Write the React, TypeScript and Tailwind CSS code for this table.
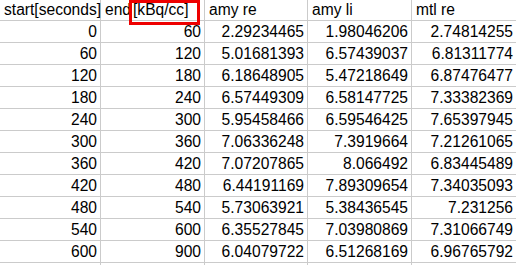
const rows: [string, string, string, string, string][] = [
  ['0', '60', '2.29234465', '1.98046206', '2.74814255'],
  ['60', '120', '5.01681393', '6.57439037', '6.81311774'],
  ['120', '180', '6.18648905', '5.47218649', '6.87476477'],
  ['180', '240', '6.57449309', '6.58147725', '7.33382369'],
  ['240', '300', '5.95458466', '6.59546425', '7.65397945'],
  ['300', '360', '7.06336248', '7.3919664', '7.21261065'],
  ['360', '420', '7.07207865', '8.066492', '6.83445489'],
  ['420', '480', '6.44191169', '7.89309654', '7.34035093'],
  ['480', '540', '5.73063921', '5.38436545', '7.231256'],
  ['540', '600', '6.35527845', '7.03980869', '7.31066749'],
  ['600', '900', '6.04079722', '6.51268169', '6.96765792'],
];

const cell = 'h-[22px] border-b border-r border-[#cbcbcb] leading-[21px] pr-[3px] text-right whitespace-nowrap overflow-hidden';
const head = 'h-[21px] border-b border-r border-[#cbcbcb] leading-[20px] pl-[4px] text-left whitespace-nowrap';

export default function App() {
  return (
    <div className="w-[518px] h-[265px] overflow-hidden bg-white text-black font-['Liberation_Sans',Arial,sans-serif] text-[15.6px]">
      <div className="grid grid-cols-[101px_104px_103px_104px_104px]">
        {/* Header row */}
        <div className={`${head} pl-[2px] overflow-visible relative z-10`}>start[seconds]</div>
        <div className={`${head} relative`}>
          end
          {/* red annotation box */}
          <span className="absolute left-[28px] top-0 z-20 h-[25px] w-[71px] border-[3px] border-[#ee0000] pl-[1px] leading-[14px]">
            [kBq/cc]
          </span>
        </div>
        <div className={head}>amy re</div>
        <div className={head}>amy li</div>
        <div className={`${head} border-r-0`}>mtl re</div>

        {/* Data rows */}
        {rows.map((r) =>
          r.map((v, i) => (
            <div key={r[0] + '-' + i} className={`${cell} ${i === 4 ? 'border-r-0' : ''}`}>
              {v}
            </div>
          ))
        )}

        {/* Empty trailing row */}
        {[0, 1, 2, 3, 4].map((i) => (
          <div key={'e' + i} className={`${cell} ${i === 4 ? 'border-r-0' : ''}`} />
        ))}
      </div>
    </div>
  );
}
